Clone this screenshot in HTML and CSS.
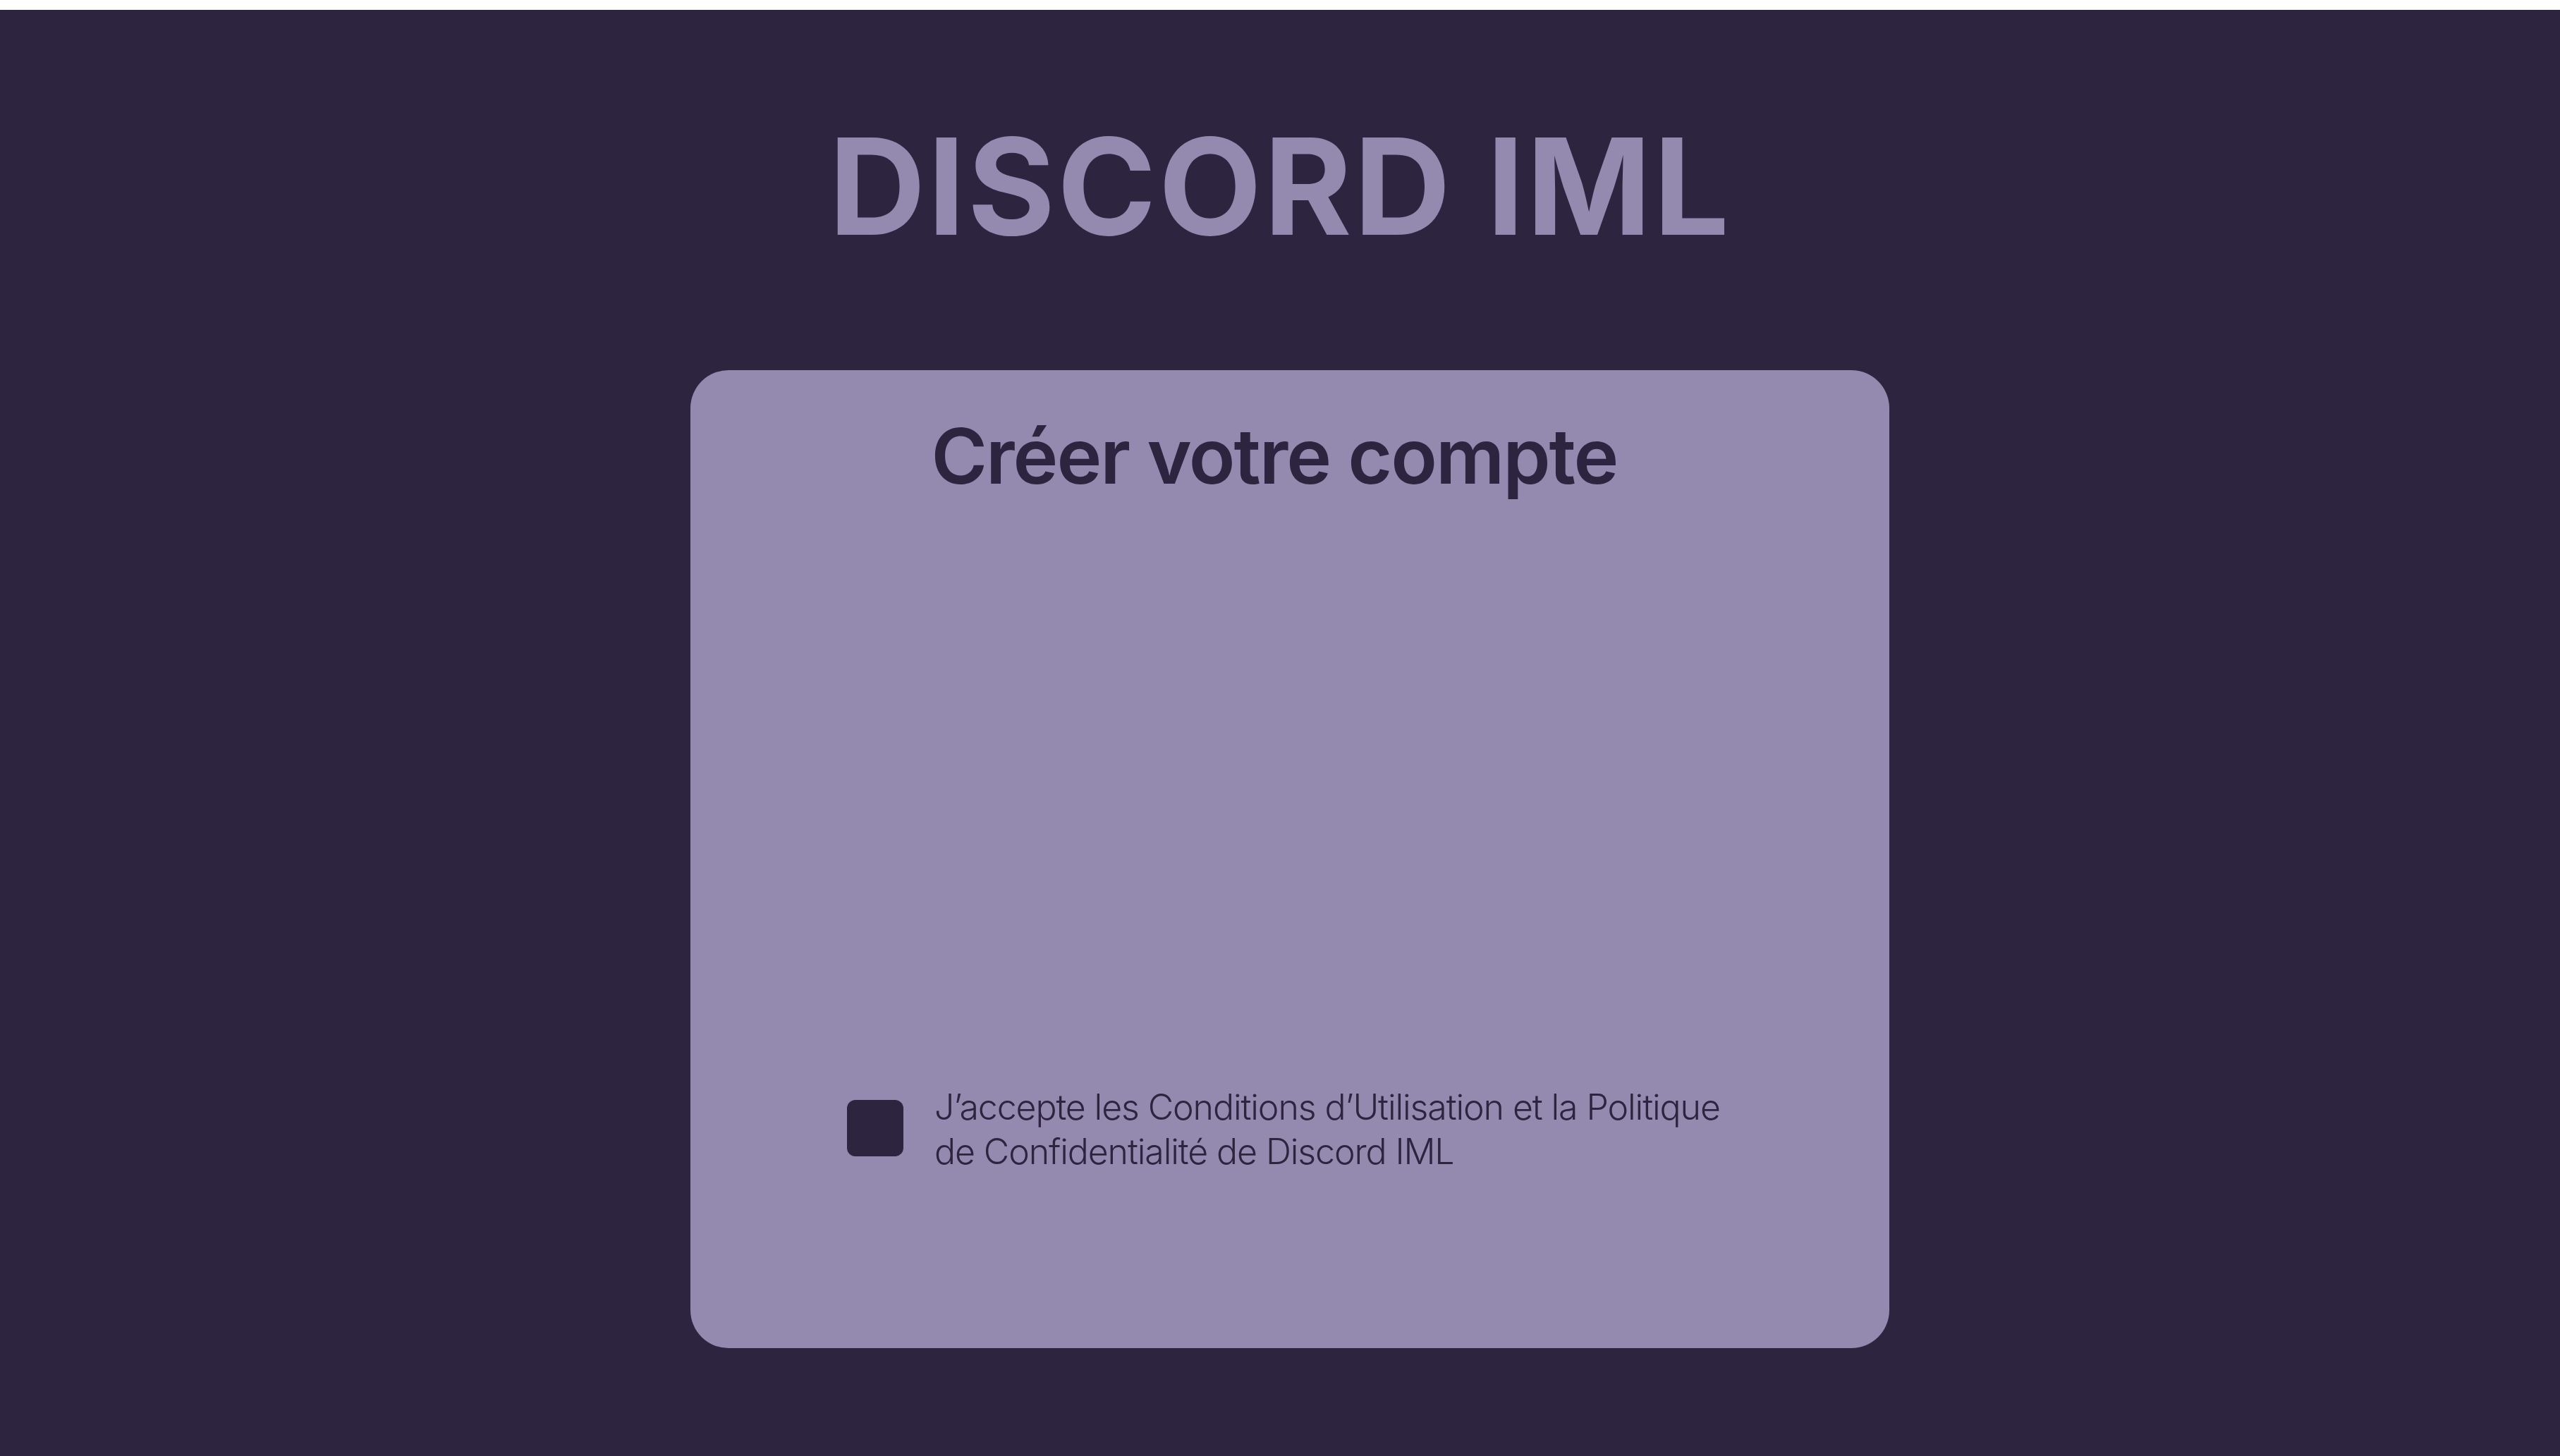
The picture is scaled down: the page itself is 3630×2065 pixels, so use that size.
FILE: index.html
```html
<!DOCTYPE html>
<html lang="fr">
<head>
<meta charset="utf-8">
<title>Discord IML - Créer votre compte</title>
<link rel="stylesheet" href="styles.css">
</head>
<body>
<div class="page">
  <h1 class="brand">DISCORD IML</h1>
  <div class="card-wrap">
    <section class="card">
      <h2 class="card-title">Créer votre compte</h2>
      <div class="fields"></div>
      <label class="terms">
        <span class="checkbox"></span>
        <span class="terms-text">J’accepte les Conditions d’Utilisation et la Politique de Confidentialité de Discord IML</span>
      </label>
    </section>
  </div>
</div>
</body>
</html>
```

FILE: styles.css
```css
html, body {
  margin: 0;
  padding: 0;
  background: #ffffff;
}
body {
  width: 3630px;
  height: 2065px;
  overflow: hidden;
}
.page {
  margin-top: 14px;
  height: 2051px;
  background: #2d2440;
  display: flex;
  flex-direction: column;
  align-items: center;
  font-family: Inter, "Liberation Sans", sans-serif;
}
.brand {
  margin: 0;
  padding-top: 130px;
  font-size: 190px;
  line-height: 240px;
  font-weight: 700;
  color: #9489ae;
  letter-spacing: 3px;
}
.card-wrap {
  align-self: stretch;
  display: flex;
  justify-content: center;
  padding-left: 28px;
  margin-top: 141px;
}
.card {
  width: 1700px;
  height: 1387px;
  box-sizing: border-box;
  background: #9489ae;
  border-radius: 54px;
  display: flex;
  flex-direction: column;
  padding: 0 0 0 222px;
}
.card-title {
  margin: 52px 0 0 0;
  padding-right: 266px;
  text-align: center;
  font-size: 108px;
  line-height: 140px;
  font-weight: 600;
  color: #2d2440;
  letter-spacing: -2px;
}
.fields {
  height: 822px;
}
.terms {
  display: flex;
  align-items: flex-start;
  gap: 44px;
}
.checkbox {
  flex: none;
  width: 80px;
  height: 80px;
  margin-top: 21px;
  border-radius: 12px;
  background: #2d2440;
}
.terms-text {
  width: 1140px;
  font-size: 50px;
  line-height: 63px;
  font-weight: 300;
  color: #2d2440;
  letter-spacing: -1.1px;
}
```
